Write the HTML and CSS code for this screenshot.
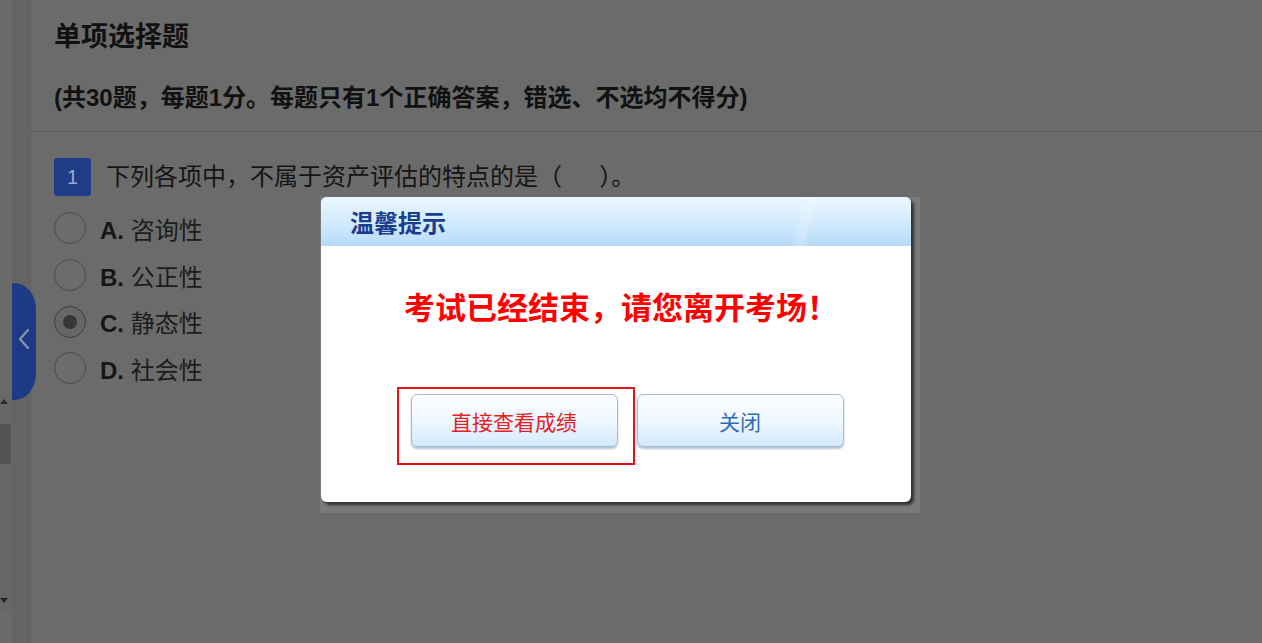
FILE: index.html
```html
<!DOCTYPE html>
<html lang="zh-CN">
<head>
    <meta charset="UTF-8">
    <meta name="viewport" content="width=device-width, initial-scale=1.0">
    <title>在线考试</title>
    <link rel="stylesheet" href="styles.css">
</head>
<body>
    <div class="page">
        <div class="scroll-col">
            <div class="scrollbar">
                <span class="arrow-up"></span>
                <span class="thumb"></span>
                <span class="arrow-down"></span>
            </div>
        </div>
        <div class="side-strip"></div>

        <button class="side-tab" aria-label="展开">
            <svg width="12" height="22" viewBox="0 0 12 22">
                <polyline points="10,2 2,11 10,20" fill="none" stroke="#8b94aa" stroke-width="2.2" stroke-linejoin="round" stroke-linecap="round"/>
            </svg>
        </button>

        <main class="main">
            <header class="section-head">
                <h1 class="section-title">单项选择题</h1>
                <p class="section-desc">(共30题，每题1分。每题只有1个正确答案，错选、不选均不得分)</p>
            </header>

            <div class="question">
                <div class="question-row">
                    <span class="q-num">1</span>
                    <span class="q-text">下列各项中，不属于资产评估的特点的是（　&nbsp;&nbsp;）。</span>
                </div>
                <ul class="options">
                    <li class="option"><span class="radio"></span><span class="opt-label"><b>A.</b> 咨询性</span></li>
                    <li class="option"><span class="radio"></span><span class="opt-label"><b>B.</b> 公正性</span></li>
                    <li class="option"><span class="radio checked"></span><span class="opt-label"><b>C.</b> 静态性</span></li>
                    <li class="option"><span class="radio"></span><span class="opt-label"><b>D.</b> 社会性</span></li>
                </ul>
            </div>
        </main>
    </div>

    <div class="dialog-frame">
        <div class="dialog">
            <div class="dialog-head">温馨提示</div>
            <div class="dialog-body">
                <p class="dialog-msg">考试已经结束，请您离开考场！</p>
                <div class="dialog-actions">
                    <button class="dlg-btn btn-score">直接查看成绩</button>
                    <button class="dlg-btn btn-close">关闭</button>
                </div>
            </div>
        </div>
        <div class="mark-box"></div>
    </div>
</body>
</html>
```

FILE: styles.css
```css
:root {
    --bg: #6b6b6b;
    --strip: #646464;
    --line: #5a5a5a;
    --text: #141414;
    --tab-blue: #1d3a84;
    --cjk: "Liberation Sans", "Noto Sans CJK SC", sans-serif;
}

html, body {
    margin: 0;
    padding: 0;
    height: 100%;
    overflow: hidden;
}

body {
    background-color: var(--bg);
    color: var(--text);
    font-family: var(--cjk);
}

.page {
    display: flex;
    height: 643px;
}

/* left scroll column */
.scroll-col {
    width: 12px;
    padding-top: 396px;
    background-color: #6a6a6a;
}

.scrollbar {
    height: 216px;
    display: flex;
    flex-direction: column;
    align-items: flex-start;
    background-color: #676767;
}

.arrow-up,
.arrow-down {
    width: 0;
    height: 0;
    margin: 3px 0 0 0;
    border-left: 4px solid transparent;
    border-right: 4px solid transparent;
}

.arrow-up {
    border-bottom: 5px solid #2c2c2c;
}

.arrow-down {
    margin-top: auto;
    margin-bottom: 9px;
    border-top: 5px solid #222;
}

.thumb {
    width: 11px;
    height: 40px;
    margin-top: 20px;
    background-color: #545454;
}

.side-strip {
    width: 18px;
    background-color: var(--strip);
    border-right: 1px solid #606060;
}

.side-tab {
    position: absolute;
    left: 12px;
    top: 283px;
    width: 24px;
    height: 117px;
    padding: 0;
    border: none;
    border-radius: 0 22px 22px 0 / 0 26px 26px 0;
    background-color: var(--tab-blue);
    display: flex;
    align-items: center;
    justify-content: center;
}

.side-tab svg {
    margin-left: -1px;
    margin-top: -6px;
}

/* main content */
.main {
    flex: 1;
}

.section-head {
    padding: 20px 0 17px 23px;
    border-bottom: 1px solid var(--line);
}

.section-title {
    margin: 0;
    font-size: 27px;
    line-height: 34px;
    font-weight: bold;
    color: #111;
}

.section-desc {
    margin: 28px 0 0 0;
    font-size: 24px;
    line-height: 32px;
    font-weight: bold;
    color: #111;
}

.question {
    padding: 26px 0 0 23px;
}

.question-row {
    display: flex;
    align-items: center;
    gap: 15px;
}

.q-num {
    width: 37px;
    height: 38px;
    border-radius: 3px;
    background-color: #1e3c88;
    color: #9ba7c7;
    font-size: 20px;
    display: flex;
    align-items: center;
    justify-content: center;
}

.q-text {
    font-size: 24px;
    line-height: 38px;
    color: var(--text);
}

.options {
    list-style: none;
    margin: 9px 0 0 0;
    padding: 0;
}

.option {
    height: 46.7px;
    display: flex;
    align-items: center;
    gap: 14px;
}

.radio {
    width: 30px;
    height: 30px;
    border-radius: 50%;
    border: 1px solid #4d4d4d;
    background-color: #6c6c6c;
    display: flex;
    align-items: center;
    justify-content: center;
}

.radio.checked {
    border-color: #3e3e3e;
    background-color: #666;
}

.radio.checked::after {
    content: "";
    width: 14px;
    height: 14px;
    border-radius: 50%;
    background-color: #363636;
}

.opt-label {
    font-size: 24px;
    color: #1c1c1c;
}

.opt-label b {
    color: #161616;
}

/* modal dialog */
.dialog-frame {
    position: fixed;
    left: 320px;
    top: 197px;
    width: 600px;
    height: 316px;
    background-color: #7a7a7a;
}

.dialog {
    margin-left: 1px;
    width: 590px;
    height: 305px;
    border-radius: 6px;
    background-color: #fff;
    overflow: hidden;
    box-shadow: 3px 3px 3px rgba(0, 0, 0, 0.6);
    display: flex;
    flex-direction: column;
}

.dialog-head {
    height: 49px;
    padding-left: 29px;
    box-sizing: border-box;
    display: flex;
    align-items: center;
    font-size: 24px;
    font-weight: bold;
    color: #1a3d8e;
    background:
        radial-gradient(ellipse 130px 170px at 98% 125%, transparent 70%, rgba(255, 255, 255, 0.22) 75%, transparent 84%),
        linear-gradient(180deg, #ebf7ff 0%, #d3ebfd 50%, #b7dafa 100%);
}

.dialog-body {
    flex: 1;
    display: flex;
    flex-direction: column;
    align-items: center;
}

.dialog-msg {
    margin: 43px 0 0 0;
    padding-left: 10px;
    font-size: 31px;
    line-height: 40px;
    font-weight: bold;
    color: #ff0000;
}

.dialog-actions {
    display: flex;
    gap: 19px;
    margin-top: 65px;
    padding-left: 22px;
}

.dlg-btn {
    width: 207px;
    height: 53px;
    border: 1px solid #9dbddb;
    border-radius: 6px;
    background: linear-gradient(180deg, #fbfdff 0%, #eef7ff 50%, #d5eafc 100%);
    box-shadow: 0 2px 2px rgba(120, 150, 180, 0.55);
    font-family: var(--cjk);
    font-size: 21px;
    cursor: pointer;
}

.btn-score {
    color: #e3211f;
}

.btn-close {
    color: #2e6db3;
}

.mark-box {
    position: absolute;
    left: 77px;
    top: 190px;
    width: 234px;
    height: 74px;
    border: 2px solid #e5121a;
}
```
